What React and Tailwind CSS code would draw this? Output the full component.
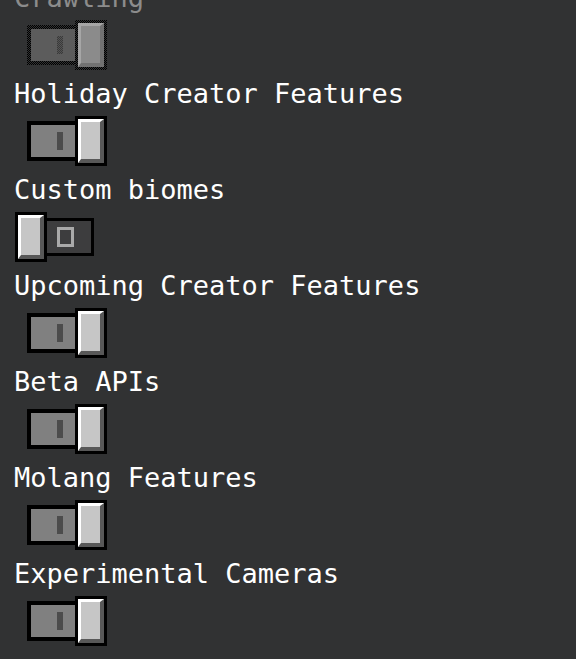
import React from "react";

const rows = [
  { label: "Crawling", state: "disabled" },
  { label: "Holiday Creator Features", state: "on" },
  { label: "Custom biomes", state: "off" },
  { label: "Upcoming Creator Features", state: "on" },
  { label: "Beta APIs", state: "on" },
  { label: "Molang Features", state: "on" },
  { label: "Experimental Cameras", state: "on" },
];

function Knob() {
  return (
    <div className="relative z-10 w-[32px] h-[50px] bg-black p-[3px] shrink-0">
      <div className="w-full h-full bg-[#c6c6c6] border-t-[3px] border-l-[3px] border-t-white border-l-white border-r-[4px] border-b-[4px] border-r-[#585858] border-b-[#585858]" />
    </div>
  );
}

function DisabledKnob() {
  return (
    <div className="relative z-10 w-[32px] h-[50px] bg-[image:repeating-conic-gradient(#000_0%_25%,#313233_0%_50%)] bg-[length:2px_2px] p-[3px] shrink-0">
      <div className="w-full h-full bg-[#8b8b8b] border-t-[3px] border-l-[3px] border-t-[#a6a6a6] border-l-[#a6a6a6] border-r-[4px] border-b-[4px] border-r-[#727272] border-b-[#727272]" />
    </div>
  );
}

function Toggle({ state }) {
  if (state === "on") {
    return (
      <div className="flex items-center ml-[27px] h-[50px]">
        <div className="w-[52px] h-[40px] bg-black p-[4px] shrink-0">
          <div className="w-full h-full bg-[#808080] flex items-center pl-[26px]">
            <div className="w-[6px] h-[18px] bg-[#4c4c4c]" />
          </div>
        </div>
        <div className="-ml-[4px]">
          <Knob />
        </div>
      </div>
    );
  }
  if (state === "off") {
    return (
      <div className="flex items-center ml-[15px] h-[50px]">
        <Knob />
        <div className="-ml-[4px] w-[51px] h-[38px] bg-black p-[3px] shrink-0">
          <div className="w-full h-full bg-[#3d3d3e] flex items-center pl-[11px]">
            <div className="w-[17px] h-[20px] border-[3px] border-[#a9a9a9]" />
          </div>
        </div>
      </div>
    );
  }
  return (
    <div className="flex items-center ml-[27px] h-[50px]">
      <div className="w-[52px] h-[40px] bg-[image:repeating-conic-gradient(#000_0%_25%,#313233_0%_50%)] bg-[length:2px_2px] p-[4px] shrink-0">
        <div className="w-full h-full bg-[#5c5c5c] flex items-center pl-[26px]">
          <div className="w-[6px] h-[18px] bg-[image:repeating-conic-gradient(#3a3a3a_0%_25%,#555555_0%_50%)] bg-[length:2px_2px]" />
        </div>
      </div>
      <div className="-ml-[4px]">
        <DisabledKnob />
      </div>
    </div>
  );
}

export default function App() {
  return (
    <div className="w-[576px] h-[659px] overflow-hidden bg-[#313233] font-['DejaVu_Sans_Mono',monospace]">
      <div className="-mt-[16px] flex flex-col">
        {rows.map((r) => (
          <div key={r.label} className="flex flex-col h-[96px]">
            <div
              className={
                "h-[28px] leading-[28px] pl-[14px] text-[27px] whitespace-nowrap " +
                (r.state === "disabled" ? "text-[#8c8c8c]" : "text-white")
              }
            >
              {r.label}
            </div>
            <div className="mt-[8px]">
              <Toggle state={r.state} />
            </div>
          </div>
        ))}
      </div>
    </div>
  );
}
